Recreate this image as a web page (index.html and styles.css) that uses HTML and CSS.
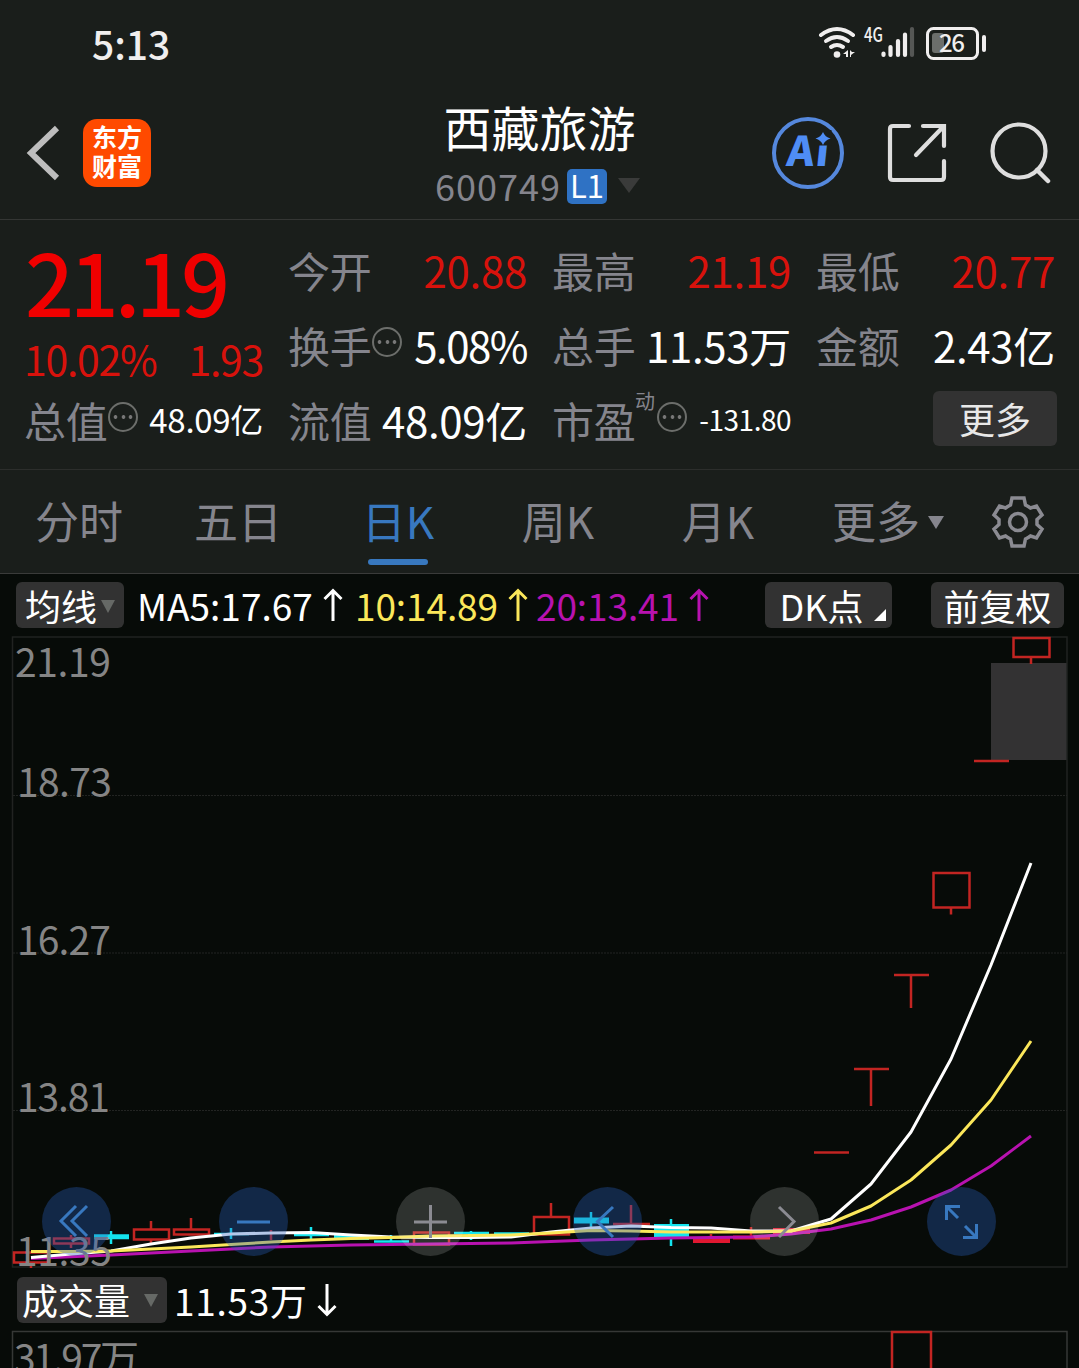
FILE: index.html
```html
<!DOCTYPE html>
<html lang="zh-CN">
<head>
	<meta charset="utf-8">
	<meta name="viewport" content="width=device-width, initial-scale=1">
	<title>西藏旅游 600749</title>
	<link rel="stylesheet" href="styles.css">
</head>
<body>
	<div class="status">
		<span class="clock">5:13</span>
		<svg class="status-icons" width="170" height="36" viewBox="0 0 170 36">
			<g fill="none" stroke="#f0eeee" stroke-width="4" stroke-linecap="round">
				<path d="M3 10Q19 -2 35 10"/>
				<path d="M8 16Q19 8 30 16"/>
				<path d="M13 22Q19 18 25 22"/>
			</g>
			<circle cx="19" cy="29.500" r="3.300" fill="#f0eeee"/>
			<path d="M25 29l5-4v7h-2v-3zM32 25v7l1 0v-2l4-3h-3z" fill="#f0eeee"/>
			<text class="net" x="46" y="16.500" textLength="19" lengthAdjust="spacingAndGlyphs">4G</text>
			<g stroke="#f0eeee" stroke-width="4.200" stroke-linecap="round">
				<path d="M65.500 28.500v1.500M72.500 22v8M80 16v14M87 9.500v20.500"/>
				<path d="M94 4v26" stroke="#555755"/>
			</g>
			<rect x="114" y="8" width="12" height="20" rx="3" fill="#6b6e6b"/>
			<rect x="109.500" y="3.500" width="50" height="30" rx="6" fill="none" stroke="#f0eeee" stroke-width="3"/>
			<rect x="164" y="10" width="4" height="17" rx="2" fill="#f0eeee"/>
			<text class="batt" x="121" y="27" textLength="26">26</text>
		</svg>
	</div>

	<header>
		<div class="side">
			<svg width="36" height="60" viewBox="0 0 36 60"><path d="M33 5L7 30L33 55" fill="none" stroke="#bdbdbd" stroke-width="6"/></svg>
			<div class="logo">东方<br>财富</div>
		</div>
		<div class="title">
			<h1>西藏旅游</h1>
			<p><span class="code">600749</span><b>L1</b><i class="tri"></i></p>
		</div>
		<div class="side tools">
			<svg width="74" height="74" viewBox="0 0 74 74">
				<circle cx="37" cy="37" r="34" fill="none" stroke="#5588dd" stroke-width="4"/>
				<text class="ai" x="20" y="50" textLength="42" transform="skewX(-6)">Ai</text>
				<path class="cover" d="M43.500 14h17v15.500h-17z"/>
				<path d="M52 16q2 5 7.500 6.500q-5.500 1.500-7.500 6.500q-2-5-7.500-6.500q5.500-1.500 7.500-6.500z" fill="#4f8df5"/>
			</svg>
			<svg width="60" height="60" viewBox="0 0 60 60">
				<path d="M22 3H6Q3 3 3 6V54Q3 57 6 57H54Q57 57 57 54V38M36 3H57V23M56 4L29 32" fill="none" stroke="#dedede" stroke-width="4.200" stroke-linecap="round"/>
			</svg>
			<svg width="62" height="62" viewBox="0 0 62 62">
				<circle cx="30" cy="29" r="26.500" fill="none" stroke="#dedede" stroke-width="4.200"/>
				<path d="M48 48L59 59" stroke="#dedede" stroke-width="4.500" stroke-linecap="round"/>
			</svg>
		</div>
	</header>

	<section class="quote">
		<div class="col">
			<div class="price">21.19</div>
			<div class="change"><span>10.02%</span><span>1.93</span></div>
			<div class="item"><label>总值</label><i class="dots"></i><span class="small">48.09亿</span></div>
		</div>
		<div class="col">
			<div class="item"><label>今开</label><span class="up">20.88</span></div>
			<div class="item"><label>换手</label><i class="dots"></i><span class="rate">5.08%</span></div>
			<div class="item"><label>流值</label><span>48.09亿</span></div>
		</div>
		<div class="col">
			<div class="item"><label>最高</label><span class="up">21.19</span></div>
			<div class="item"><label>总手</label><span>11.53万</span></div>
			<div class="item"><label>市盈<sup>动</sup></label><i class="dots"></i><span class="tiny">-131.80</span></div>
		</div>
		<div class="col">
			<div class="item"><label>最低</label><span class="up">20.77</span></div>
			<div class="item"><label>金额</label><span>2.43亿</span></div>
			<div class="item end"><button class="more">更多</button></div>
		</div>
	</section>

	<nav>
		<a>分时</a>
		<a>五日</a>
		<a class="on">日K</a>
		<a>周K</a>
		<a>月K</a>
		<a class="drop">更多<i class="tri"></i></a>
		<svg width="54" height="54" viewBox="-27 -27 54 54" fill="none" stroke="#8b8b92" stroke-width="3.500">
			<path d="M-6 -24H6L7.500 -17Q10.500 -15.500 12.500 -14L18.500 -16L24 -7L19 -2.500V2.500L24 7L18.500 16L12.500 14Q10.500 15.500 7.500 17L6 24H-6L-7.500 17Q-10.500 15.500 -12.500 14L-18.500 16L-24 7L-19 2.500V-2.500L-24 -7L-18.500 -16L-12.500 -14Q-10.500 -15.500 -7.500 -17Z"/>
			<circle r="8.500"/>
		</svg>
	</nav>

	<div class="bar ma">
		<button class="pick">均线<i class="tri"></i></button>
		<span class="ma5">MA5:17.67<svg class="arrow" viewBox="0 0 20 34"><path d="M10 33V3M1.500 11L10 2.500L18.500 11"/></svg></span>
		<span class="ma10">10:14.89<svg class="arrow" viewBox="0 0 20 34"><path d="M10 33V3M1.500 11L10 2.500L18.500 11"/></svg></span>
		<span class="ma20">20:13.41<svg class="arrow" viewBox="0 0 20 34"><path d="M10 33V3M1.500 11L10 2.500L18.500 11"/></svg></span>
		<button class="dk">DK点<i class="corner"></i></button>
		<button class="fq">前复权</button>
	</div>

	<div class="chart">
		<svg width="1079" height="633" viewBox="0 636 1079 633">
			<rect class="frame" x="12.500" y="637" width="1054.500" height="630"/>
			<path class="grid" d="M13 795.500H1067M13 953H1067M13 1110.500H1067"/>
			<rect x="991" y="663" width="75.500" height="97" fill="#333233"/>

			<!-- candles, 40px apart -->
			<g class="red">
				<path d="M14 1252.500H48V1262.500H14ZM31 1262V1268"/>
				<path d="M54 1238.500H89V1243.500H54ZM71 1235V1238M71 1244V1248"/>
				<path d="M134 1229.500H169V1239.500H134ZM151 1221V1229M151 1240V1243"/>
				<path d="M174 1229.500H209V1234.500H174ZM191 1218V1229"/>
				<path d="M271 1230V1240"/>
				<path d="M414 1232.500H449V1244.500H414Z"/>
				<path d="M534 1234.500V1217H569V1234.500ZM551 1203V1217"/>
				<path d="M613 1224H650M631 1205V1224"/>
				<path d="M693 1240.500H730" stroke-width="5"/>
				<path d="M733 1237.500H770" stroke-width="4"/>
				<path d="M773 1231H810" stroke-width="6"/>
				<path d="M711 1234V1240M751 1227V1237"/>
				<path d="M814 1152.500H849"/>
				<path d="M854 1069H889M871 1069V1106"/>
				<path d="M894 975H929M911 975V1008"/>
				<path d="M933.500 873H969.500V907.500H933.500ZM951 908V914.500"/>
				<path d="M974 761H1009"/>
				<path d="M1013.500 638H1049.500V657H1013.500ZM1031 657V664"/>
			</g>
			<g class="cyan">
				<path d="M94 1236.800H129" stroke-width="5"/>
				<path d="M111 1231V1244"/>
				<path d="M214 1234H249M231 1228V1239"/>
				<path d="M294 1235H329M311 1227V1240"/>
				<path d="M334 1237.500H369" stroke-width="5"/>
				<path d="M374 1241.500H409M391 1235V1241"/>
				<path d="M454 1233H489M471 1231V1240"/>
				<path d="M494 1233.500H529"/>
				<path d="M574 1220.500H609" stroke-width="6"/>
				<path d="M591 1212V1227"/>
				<path d="M654 1230.500H689" stroke-width="13"/>
				<path d="M671 1219V1246"/>
			</g>

			<polyline class="l20" points="31,1258.500 111,1255 191,1251 271,1247 351,1245 431,1244 511,1243 591,1240 671,1238 751,1237 791,1234 831,1229 871,1220 911,1207 951,1190 991,1166 1031,1136"/>
			<polyline class="l5" points="31,1257.500 71,1254 111,1251 151,1244 191,1238 231,1234 271,1233 311,1232.500 351,1235 391,1237 431,1237.500 471,1237.500 511,1237 551,1232 591,1228 631,1226 671,1227.500 711,1228 751,1231 791,1231 831,1219 871,1184 911,1132 951,1059 991,965 1031,863"/>
			<polyline class="l10" points="31,1251.500 71,1251.500 111,1251 151,1249 191,1247 231,1244.500 271,1242 311,1240 351,1238.500 391,1237.500 431,1236 471,1235.500 511,1235 551,1233 591,1230.500 631,1231 671,1232 711,1232 751,1232 791,1231 831,1223 871,1206 911,1180 951,1145 991,1100 1031,1041"/>

			<g class="axis">
				<text x="15" y="677" textLength="96">21.19</text>
				<text x="17" y="797" textLength="95">18.73</text>
				<text x="17" y="955" textLength="94">16.27</text>
				<text x="17" y="1112" textLength="93">13.81</text>
				<text x="16" y="1266" textLength="96">11.35</text>
			</g>
		</svg>
		<div class="controls">
			<button><svg viewBox="0 0 69 69"><path d="M34 19L19 34L34 49M45 19L30 34L45 49"/></svg></button>
			<button><svg viewBox="0 0 69 69"><path d="M18 35H51"/></svg></button>
			<button class="gray"><svg viewBox="0 0 69 69"><path d="M18 35H51M34.500 18V51"/></svg></button>
			<button><svg viewBox="0 0 69 69"><path d="M40 20L24.500 34.500L40 50"/></svg></button>
			<button class="gray"><svg viewBox="0 0 69 69"><path d="M29 20L44 34.500L29 50"/></svg></button>
			<button><svg viewBox="0 0 69 69"><path d="M19.500 33V19.500H33M20 20L31 31M49.500 37V50.500H36M49 50L38 39"/></svg></button>
		</div>
	</div>

	<div class="bar vol">
		<button class="pick">成交量<i class="tri"></i></button>
		<span>11.53万<svg class="arrow" viewBox="0 0 20 34"><path d="M10 1V31M1.500 23L10 31.500L18.500 23"/></svg></span>
	</div>

	<div class="volume">
		<svg width="1079" height="38" viewBox="0 1330 1079 38">
			<path class="frame bright" d="M12.500 1368V1331.500H1067V1368"/>
			<path class="red" d="M892 1368V1332H931V1368" stroke-width="3"/>
			<g class="axis"><text x="14" y="1373" textLength="125">31.97万</text></g>
		</svg>
	</div>
</body>
</html>
```

FILE: styles.css
```css
*{
	box-sizing: border-box;
}

body{
	margin: 0px;
	width: 1079px;
	height: 1368px;
	overflow: hidden;
	background: #070b08;
	color: #fff;
	font-family: "Noto Sans CJK SC", "Noto Sans", sans-serif;
}

button{
	font: inherit;
	color: inherit;
	border: 0px;
	padding: 0px;
	background: #323232;
	border-radius: 6px;
}

svg{
	display: block;
	flex: none;
}

.status{
	height: 90px;
	padding: 0px 91px 4px 92px;
	background: #1a1e1b;
	display: flex;
	align-items: center;
	justify-content: space-between;
}

.clock{
	font-size: 39px;
	line-height: 50px;
	font-weight: 500;
	color: #f0eeee;
}

.net, .batt{
	fill: #f0eeee;
	font-weight: 500;
}

.net{ font-size: 20px; }
.batt{ font-size: 24px; }

header{
	height: 130px;
	padding: 0px 28px 0px 24px;
	background: #1a1e1b;
	border-bottom: 1px solid #343634;
	display: grid;
	grid-template-columns: 360px 1fr 360px;
}

.side{
	display: flex;
	align-items: center;
	gap: 23px;
	height: 125px;
}

.tools{
	justify-content: flex-end;
	gap: 42px;
}

.logo{
	width: 68px;
	height: 68px;
	padding-top: 3px;
	border-radius: 14px;
	background: #ff4a00;
	font-size: 25px;
	line-height: 29px;
	font-weight: 700;
	text-align: center;
}

.ai{
	font-size: 41px;
	font-weight: 900;
	fill: #4f8df5;
}

.cover{
	fill: #1a1e1b;
}

.title{
	text-align: center;
}

h1{
	margin: 6px 0px 0px 4px;
	font-size: 48px;
	line-height: 60px;
	font-weight: 400;
}

.title p{
	margin: 9px 0px 0px 0px;
	height: 44px;
	display: flex;
	align-items: center;
	justify-content: center;
	color: #85858d;
	font-size: 36px;
	line-height: 40px;
	letter-spacing: 1px;
}

.title .code{
	margin-top: -4px;
}

.title b{
	width: 40px;
	height: 35px;
	margin: -2px 11px 0px 6px;
	background: #2f72c4;
	border-radius: 5px;
	color: #fff;
	font-weight: 400;
	font-size: 31px;
	line-height: 31px;
	letter-spacing: 0px;
}

.tri{
	display: inline-block;
	border: 11px solid transparent;
	border-top: 15px solid #3a3b3a;
	border-bottom: 0px;
}

.title .tri{
	margin-top: -3px;
}

.quote{
	height: 250px;
	padding: 12px 25px 0px 24px;
	background: #1a1e1b;
	border-bottom: 1px solid #2c2e2c;
	display: grid;
	grid-template-columns: repeat(4, 239px);
	gap: 25px;
}

.item{
	height: 75px;
	display: flex;
	align-items: center;
	font-size: 42px;
	line-height: 75px;
	letter-spacing: -0.3px;
	white-space: nowrap;
}

.item span{
	margin-left: auto;
}

label{
	color: #85858d;
	position: relative;
}

sup{
	position: absolute;
	left: 83px;
	top: -16px;
	font-size: 20px;
	line-height: 70px;
}

.dots{
	width: 30px;
	height: 30px;
	margin: -6px 0px 0px 1px;
	border: 2px solid #6c6e6b;
	border-radius: 50%;
	background: radial-gradient(circle, #777 1.500px, transparent 2.200px) center / 7px 26px no-repeat,
		radial-gradient(circle, #777 1.500px, transparent 2.200px) 2px 50% / 7px 26px no-repeat,
		radial-gradient(circle, #777 1.500px, transparent 2.200px) 17px 50% / 7px 26px no-repeat;
}

label:has(sup) + .dots{
	margin-left: 22px;
}

.item .rate{
	letter-spacing: -1.5px;
}

.item .small{
	font-size: 33px;
}

.item .tiny{
	font-size: 28px;
	letter-spacing: -0.5px;
}

.up{
	color: #d8120c;
}

.price{
	height: 104px;
	padding-left: 1px;
	font-size: 86px;
	line-height: 96px;
	font-weight: 500;
	letter-spacing: -4.200px;
	color: #f00000;
}

.change{
	height: 46px;
	display: flex;
	justify-content: space-between;
	font-size: 41px;
	line-height: 44px;
	letter-spacing: -1.300px;
	color: #d8120c;
}

.end{
	justify-content: flex-end;
}

.more{
	width: 124px;
	height: 55px;
	margin: -3px -2px 0px 0px;
	font-size: 36px;
	line-height: 50px;
	color: #e8e8e8;
}

nav{
	height: 104px;
	background: #1a1e1b;
	border-bottom: 1px solid #3a3b3a;
	display: grid;
	grid-template-columns: 158px repeat(4, 160px) 180px 1fr;
	align-items: center;
	text-align: center;
	color: #85858d;
	font-size: 44px;
	line-height: 100px;
}

nav a{
	height: 103px;
	white-space: nowrap;
}

nav .on{
	color: #3878bf;
	position: relative;
}

nav .on:after{
	content: "";
	position: absolute;
	left: 50px;
	bottom: 8px;
	width: 60px;
	height: 6px;
	border-radius: 3px;
	background: #3878bf;
}

nav .tri{
	border-width: 13px 8px 0px 8px;
	border-top-color: #85858d;
	margin: 0px 0px 10px 8px;
}

nav svg{
	margin-left: 13px;
}

.bar{
	height: 62px;
	display: flex;
	align-items: center;
	font-size: 37px;
	line-height: 60px;
	white-space: nowrap;
}

.bar button{
	height: 46px;
	line-height: 43px;
	font-size: 36px;
}

.bar span{
	display: flex;
	align-items: center;
}

.arrow{
	width: 20px;
	height: 34px;
	margin-left: 10px;
	fill: none;
	stroke: currentColor;
	stroke-width: 3px;
}

.ma{
	padding-left: 16px;
}

.ma span{
	letter-spacing: 0px;
}

.ma .ma10, .ma .ma20{
	letter-spacing: -0.100px;
}

.pick .tri{
	border-width: 13px 7px 0px 7px;
	border-top-color: #666966;
	margin: 0px 0px 8px 4px;
}

.ma .pick{
	width: 108px;
	margin-right: 13px;
}

.ma5{ width: 218px; }
.ma10{ width: 181px; color: #fbe75a; }
.ma20{ width: 229px; color: #b812b0; }

.dk{
	width: 127px;
	margin-right: 39px;
	position: relative;
	padding-right: 14px;
}

.fq{
	width: 133px;
}

.corner{
	position: absolute;
	right: 6px;
	bottom: 7px;
	border-left: 12px solid transparent;
	border-bottom: 12px solid #fff;
}

.chart{
	position: relative;
	height: 633px;
}

.frame{
	fill: none;
	stroke: #212321;
	stroke-width: 1.5px;
}

.bright{
	stroke: #363836;
}

.grid{
	fill: none;
	stroke: #222422;
	stroke-width: 1px;
	stroke-dasharray: 2 1;
}

.red, .cyan{
	fill: none;
	stroke: #c22522;
	stroke-width: 2.5px;
}

.cyan{
	stroke: #14e4ee;
}

.red path[stroke-width="4"], .red path[stroke-width="5"], .red path[stroke-width="6"]{
	stroke: #e01830;
}

polyline{
	fill: none;
	stroke-width: 3px;
	stroke-linejoin: round;
}

.l5{ stroke: #fff; }
.l10{ stroke: #fbe75a; }
.l20{ stroke: #b812b0; }

.axis{
	font-size: 39px;
	fill: #858585;
}

.controls{
	position: absolute;
	left: 42px;
	top: 551px;
	display: flex;
	gap: 108px;
}

.controls button{
	width: 69px;
	height: 69px;
	border-radius: 50%;
	background: rgba(40,95,189,0.35);
}

.controls .gray{
	background: rgba(255,255,255,0.16);
}

.controls path{
	fill: none;
	stroke: #3878bf;
	stroke-width: 3px;
}

.controls .gray path{
	stroke: #8b8b92;
}

.vol{
	height: 61px;
	padding-left: 17px;
}

.vol span{
	letter-spacing: 0.700px;
}

.vol .arrow{
	margin-left: 9px;
}

.vol .pick{
	width: 150px;
	margin-right: 7px;
	padding-right: 4px;
}

.vol .pick .tri{
	margin-left: 14px;
}
```
